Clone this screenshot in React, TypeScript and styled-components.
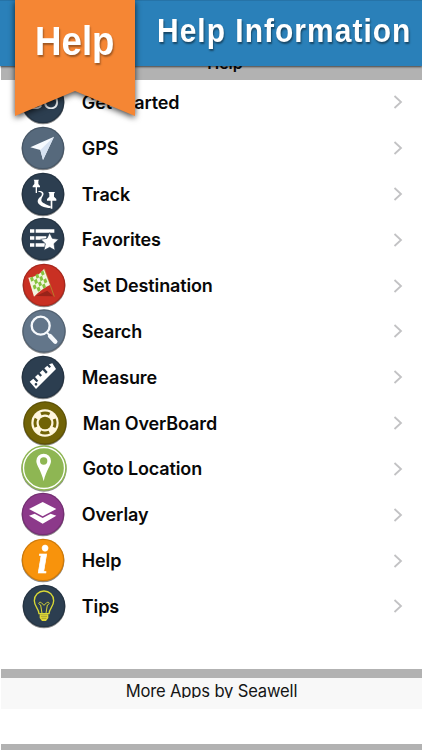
import React from "react";
import styled, { createGlobalStyle } from "styled-components";

const GlobalStyle = createGlobalStyle`
  body { margin: 0; background: #fff; }
`;

const Screen = styled.main`
  position: relative;
  width: 422px;
  height: 750px;
  overflow: hidden;
  background: #fff;
  color: #080808;
  font-family: Inter, sans-serif;
  display: flex;
  flex-direction: column;
`;

const Banner = styled.header`
  position: relative;
  z-index: 1;
  flex: none;
  height: 66px;
  box-sizing: border-box;
  padding: 11px 0 0 157px;
  background: #2a80b9;
  border-top: 1px solid #2673a7;
  box-shadow: 0 1px 2px rgba(0, 0, 0, 0.65);
`;

const BannerTitle = styled.h1`
  margin: 0;
  width: max-content;
  font: bold 33.5px/38px "Liberation Sans", Arial, sans-serif;
  letter-spacing: 1.15px;
  color: #fff;
  text-shadow: 1px 2px 2px rgba(0, 0, 0, 0.45);
  transform: scaleX(0.894);
  transform-origin: left;
  white-space: nowrap;
`;

const Ribbon = styled.div`
  position: absolute;
  z-index: 2;
  left: 15px;
  top: 0;
  width: 120px;
  height: 116px;
  filter: drop-shadow(0 2px 3px rgba(0, 0, 0, 0.75));
`;

const RibbonShape = styled.div`
  height: 100%;
  background: #f58634;
  clip-path: polygon(0 0, 100% 0, 100% 100%, 50% 78.5%, 0 100%);
`;

const RibbonText = styled.span`
  position: absolute;
  left: 19.5px;
  top: 18px;
  font: bold 41px/46px "Liberation Sans", Arial, sans-serif;
  color: #fff;
  text-shadow: 1px 2px 2px rgba(0, 0, 0, 0.35);
  transform: scaleX(0.895);
  transform-origin: left;
`;

const Strip = styled.div<{ $h: number }>`
  flex: none;
  height: ${(p) => p.$h}px;
  margin-left: 1px;
  background: #b2b2b2;
`;

const StripTitle = styled.div`
  height: 13px;
  display: flex;
  align-items: flex-end;
  justify-content: center;
  padding-left: 27px;
  margin-top: -9px;
  font-weight: 600;
  font-size: 16px;
  line-height: 13px;
`;

const List = styled.ul`
  list-style: none;
  margin: 0;
  padding: 0;
  flex: none;
  height: 589.5px;
`;

const Row = styled.li<{ $shift: number }>`
  height: 45.82px;
  display: flex;
  align-items: center;
  padding: 0 19px 0 ${(p) => 19.3 + p.$shift}px;
`;

const RowIcon = styled.svg`
  width: 48px;
  height: 48px;
  flex: none;
  overflow: visible;
  margin-top: -1px;
  filter: drop-shadow(0 1px 0.7px rgba(0, 0, 0, 0.45));
`;

const RowLabel = styled.span<{ $nudge: number }>`
  flex: 1;
  padding-left: ${(p) => 14.5 - p.$nudge}px;
  font-size: 18px;
  font-weight: 600;
  letter-spacing: -0.13px;
  white-space: nowrap;
`;

const Chevron = styled.svg`
  width: 10px;
  height: 14px;
  flex: none;
`;

const MoreApps = styled.footer`
  flex: none;
  height: 31.5px;
  margin-left: 1px;
  background: #f8f8f8;
  text-align: center;
`;

const MoreText = styled.div`
  height: 20.5px;
  overflow: hidden;
  font-size: 16.6px;
  letter-spacing: -0.18px;
  line-height: 27px;
  color: #151515;
`;

const Gap = styled.div`
  flex: none;
  height: 34.5px;
`;

type Item = { label: string; fill: string; shift?: number; r?: number; art: React.ReactNode };

const flagTiles: [number, number][] = [
  [0, 0], [2, 0], [4, 0], [1, 1], [3, 1], [0, 2], [2, 2], [4, 2], [1, 3], [3, 3],
];

const items: Item[] = [
  {
    label: "Get Started",
    fill: "#2c3e50",
    art: <text x="0" y="20" textAnchor="middle" fontFamily="Liberation Sans, sans-serif" fontSize="62" fill="#eef1f4">GO</text>,
  },
  {
    label: "GPS",
    fill: "#56697c",
    art: (
      <>
        <path d="M33-34-38-2-8 6 0 36Z" fill="#f7fbff" />
        <path d="M33-34-8 6 0 36Z" fill="#d7e3f2" />
      </>
    ),
  },
  {
    label: "Track",
    fill: "#2c3e50",
    art: (
      <>
        <path d="M-28-43h16l-2 4v9l5 6v4h-9v17h-4v-17h-9v-4l5-6v-9Z" fill="#fff" />
        <path d="M-14-7C-4-6 0-1-6 7-19 17-20 28-5 36 5 41 13 42 23 42V36C10 33 7 29 0 26-8 21-5 13 0 5 5-4-2-10-14-9Z" fill="#fff" />
        <path d="M16-6h20l-3 5v9l7 7v5H28v24h-5V20H12v-5l7-7v-9Z" fill="#fff" />
      </>
    ),
  },
  {
    label: "Favorites",
    fill: "#2c3e50",
    art: (
      <>
        <path d="M-39-29h13v10h-13ZM-22-29h56v10h-56ZM-39-8h13V2h-13ZM-22-8h32V2h-32ZM-39 13h13v10h-13ZM-22 13H6v10h-28Z" fill="#fff" />
        <path d="m20-19 8 17 19 3-14 13 3 20-16-9-17 9 4-20L-7 1l19-3Z" fill="#fff" stroke="#2c3e50" strokeWidth="2" />
      </>
    ),
  },
  {
    label: "Set Destination",
    fill: "#c93023",
    shift: 1,
    art: (
      <>
        <path d="M-25 33 10 17 28 34Z" fill="#982319" />
        <path d="M1-49 31 35" stroke="#b77e2b" strokeWidth="3" />
        <path d="M-47-22Q-20-22 0-48L18 0Q-2 8-30 35Z" fill="#f3f5df" />
        <g transform="matrix(8 -4.5 4 11.5 -42 -21)" fill="#86c23e">
          {flagTiles.map(([x, y]) => (
            <rect key={`${x}-${y}`} x={x} y={y} width="1" height="1" />
          ))}
        </g>
      </>
    ),
  },
  {
    label: "Search",
    fill: "#63768a",
    shift: 0.4,
    r: 65,
    art: (
      <>
        <circle cx="-10" cy="-16" r="27" fill="none" stroke="#f6f9fc" strokeWidth="7" />
        <path d="m9 5 7 7" stroke="#f6f9fc" strokeWidth="6" />
        <path d="m18 15 16 17" stroke="#f6f9fc" strokeWidth="13" strokeLinecap="round" />
      </>
    ),
  },
  {
    label: "Measure",
    fill: "#2c3e50",
    art: (
      <path
        fillRule="evenodd"
        d="m-40 14 11-9 10 11 5-5-10-11 9-8 7 7 5-4-7-8 9-8 10 11 5-5L4-26l9-8 6 7 5-4-6-7 10-3L39-24-21 36ZM-25 22a4 4 0 1 0 8 0 4 4 0 1 0-8 0Z"
        fill="#fff"
      />
    ),
  },
  {
    label: "Man OverBoard",
    fill: "#716307",
    shift: 1.3,
    r: 65,
    art: (
      <>
        <circle r="41" fill="#fff7df" />
        <circle r="30" fill="none" stroke="#716307" strokeWidth="9" strokeDasharray="27 20.12" strokeDashoffset="13.5" />
        <circle r="19" fill="#716307" />
      </>
    ),
  },
  {
    label: "Goto Location",
    fill: "#8eb653",
    shift: 1,
    r: 68,
    art: (
      <>
        <circle r="61.5" fill="none" stroke="#fff" strokeWidth="4" />
        <path fillRule="evenodd" d="M-1-43a22 22 0 0 0-22 22C-23-7-9 5-1 40 7 5 21-7 21-21A22 22 0 0 0-1-43Zm0 11a11 11 0 1 1 0 22 11 11 0 1 1 0-22Z" fill="#fff" />
      </>
    ),
  },
  {
    label: "Overlay",
    fill: "#8c398a",
    art: (
      <>
        <path d="M-42 5-25-1-1 12 23-1 40 5-1 29Z" fill="#fff" />
        <path d="M-1-36 40-15-1 7-42-15Z" fill="#fff" />
      </>
    ),
  },
  {
    label: "Help",
    fill: "#f8930c",
    art: (
      <text x="-1" y="38" textAnchor="middle" fontFamily="Liberation Serif, serif" fontStyle="italic" fontWeight="bold" fontSize="118" fill="#fff" stroke="#fff" strokeWidth="2">i</text>
    ),
  },
  {
    label: "Tips",
    fill: "#2c3e50",
    shift: 0.5,
    art: (
      <>
        <path d="M-15 23C-15 8-29 2-29-16a29 29 0 0 1 58 0C29 2 15 8 15 23Z" fill="none" stroke="#d9d936" strokeWidth="4" />
        <path d="M-6 22-10-3C-20-6-15-14-8-10l8 8 8-8C15-14 20-6 10-3L6 22" fill="none" stroke="#d9d936" strokeWidth="3" />
        <path d="M-13 25h26v11L6 45H-6l-7-9Z" fill="#e1d735" />
        <path d="M-9 31H9M-7 37H7" stroke="#8e8b35" strokeWidth="2" />
      </>
    ),
  },
];

export default function App() {
  return (
    <>
      <GlobalStyle />
      <Screen>
        <Banner>
          <BannerTitle>Help Information</BannerTitle>
        </Banner>
        <Ribbon>
          <RibbonShape />
          <RibbonText>Help</RibbonText>
        </Ribbon>
        <Strip $h={13.5}>
          <StripTitle>Help</StripTitle>
        </Strip>
        <List>
          {items.map(({ label, fill, shift = 0, r = 64, art }) => (
            <Row key={label} $shift={shift}>
              <RowIcon viewBox="-72 -72 144 144" aria-hidden="true">
                <circle r={r} fill={fill} />
                {r < 68 && <circle r={r - 2} fill="none" stroke="#000" strokeOpacity="0.17" strokeWidth="4" />}
                {art}
              </RowIcon>
              <RowLabel $nudge={shift > 0.5 ? 0.3 : shift}>{label}</RowLabel>
              <Chevron viewBox="0 0 10 14" aria-hidden="true">
                <path d="m1.5 1 6.5 6-6.5 6" fill="none" stroke="#c2c2c4" strokeWidth="1.8" />
              </Chevron>
            </Row>
          ))}
        </List>
        <Strip $h={8.5} />
        <MoreApps>
          <MoreText>More Apps by Seawell</MoreText>
        </MoreApps>
        <Gap />
        <Strip $h={8} />
      </Screen>
    </>
  );
}
